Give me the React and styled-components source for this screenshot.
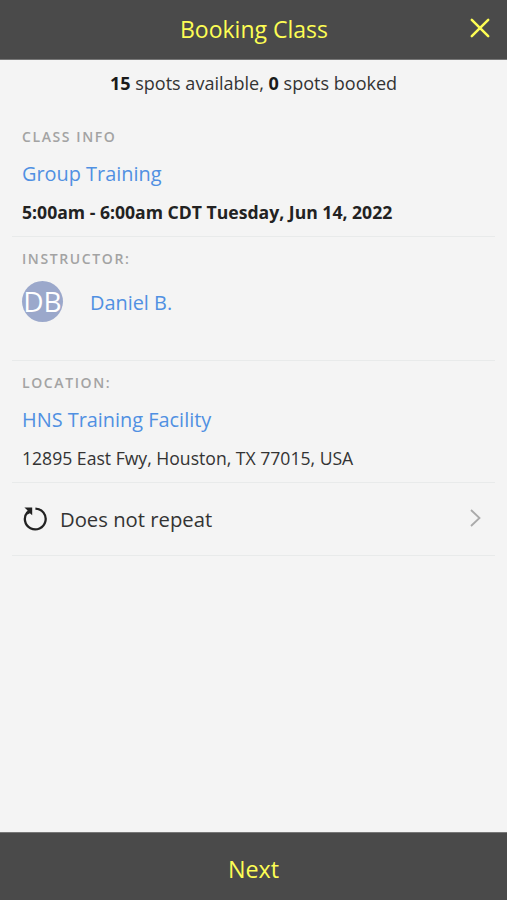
import React from 'react';
import styled, { createGlobalStyle } from 'styled-components';

const App = () => {
  return (
    <Page>
      <GlobalStyle />
      <Header>
        <Title>Booking Class</Title>
        <CloseButton aria-label="Close">
          <svg width="20" height="20" viewBox="0 0 20 20">
            <path d="M1.8 1.8L18.2 18.2M18.2 1.8L1.8 18.2" stroke="currentColor" strokeWidth="2.5" strokeLinecap="round" />
          </svg>
        </CloseButton>
      </Header>
      <Content>
        <Spots><b>15</b> spots available, <b>0</b> spots booked</Spots>
        <Section $height={122}>
          <Label>CLASS INFO</Label>
          <Link href="#">Group Training</Link>
          <Time>5:00am - 6:00am CDT Tuesday, Jun 14, 2022</Time>
        </Section>
        <Section $height={124}>
          <Label>INSTRUCTOR:</Label>
          <Instructor>
            <Avatar>DB</Avatar>
            <Link href="#">Daniel B.</Link>
          </Instructor>
        </Section>
        <Section $height={122}>
          <Label>LOCATION:</Label>
          <Link href="#">HNS Training Facility</Link>
          <Address>12895 East Fwy, Houston, TX 77015, USA</Address>
        </Section>
        <RepeatRow>
          <svg width="26" height="26" viewBox="0 0 26 26">
            <path d="M13.4 2.6A10.4 10.4 0 1 1 5.4 6.2" fill="none" stroke="currentColor" strokeWidth="2.3" />
            <path d="M2.4 1.4H10.2V9.2L7.9 7.2L5.6 8.6L4 7L5.6 4.4Z" fill="currentColor" />
          </svg>
          <RepeatText>Does not repeat</RepeatText>
          <Chevron width="11" height="18" viewBox="0 0 11 18">
            <path d="M1 1L9.5 9L1 17" />
          </Chevron>
        </RepeatRow>
      </Content>
      <NextButton>Next</NextButton>
    </Page>
  );
};

export default App;

const GlobalStyle = createGlobalStyle`
  body {
    margin: 0;
    background: #f4f4f4;
    font-family: "Open Sans", sans-serif;
    color: #222;
  }

  * {
    box-sizing: border-box;
  }
`;

const Page = styled.div`
  display: flex;
  flex-direction: column;
  height: 100vh;
`;

const Header = styled.header`
  display: grid;
  grid-template-columns: 50px 1fr 50px;
  align-items: center;
  height: 60px;
  border-bottom: 1px solid #777;
  background: #4a4a4a;
  color: #fdfd54;
`;

const Title = styled.h1`
  grid-column: 2;
  margin: 0 0 1px 1px;
  text-align: center;
  font-size: 23px;
  font-weight: 400;
`;

const CloseButton = styled.button`
  display: flex;
  padding: 0;
  margin: 0 0 3px 13px;
  border: none;
  background: none;
  color: inherit;
`;

const Content = styled.main`
  flex: 1;
  padding: 0 12px;
`;

const Spots = styled.p`
  margin: 0;
  height: 55px;
  line-height: 46px;
  text-align: center;
  font-size: 18.05px;
  color: #333;

  b {
    color: #1a1a1a;
  }
`;

const Section = styled.section`
  height: ${({ $height }) => $height}px;
  padding: 10px 10px 0;
  border-bottom: 1px solid #e8eaea;
`;

const Label = styled.h2`
  margin: 0;
  font-size: 14px;
  line-height: 23px;
  font-weight: 600;
  letter-spacing: 1.6px;
  color: #a3a3a3;
`;

const Link = styled.a`
  display: block;
  margin-top: 12px;
  font-size: 19.9px;
  line-height: 28px;
  text-decoration: none;
  color: #5090e2;
`;

const Time = styled.p`
  margin: 12px 0 0;
  font-size: 17.6px;
  line-height: 24px;
  font-weight: 700;
`;

const Address = styled(Time)`
  font-weight: 400;
  color: #333;
`;

const Instructor = styled.div`
  display: flex;
  align-items: center;
  gap: 27px;
  margin-top: 11px;

  ${Link} {
    margin-top: 2px;
  }
`;

const Avatar = styled.div`
  display: flex;
  align-items: center;
  justify-content: center;
  width: 41px;
  height: 41px;
  padding-bottom: 2px;
  border-radius: 50%;
  background: #9ba8cb;
  color: #fff;
  font-size: 28px;
`;

const RepeatRow = styled.div`
  display: flex;
  align-items: center;
  height: 73px;
  padding: 0 14px 0 10px;
  border-bottom: 1px solid #e8eaea;
`;

const RepeatText = styled.span`
  flex: 1;
  margin-left: 12px;
  font-size: 20.25px;
  color: #333;
`;

const Chevron = styled.svg`
  margin-bottom: 2px;
  fill: none;
  stroke: #aaa;
  stroke-width: 1.8;
`;

const NextButton = styled.button`
  height: 68px;
  padding: 4px 0 0;
  border: none;
  border-top: 1px solid #777;
  background: #4a4a4a;
  color: #fdfd54;
  font-family: inherit;
  font-size: 23.3px;
`;
